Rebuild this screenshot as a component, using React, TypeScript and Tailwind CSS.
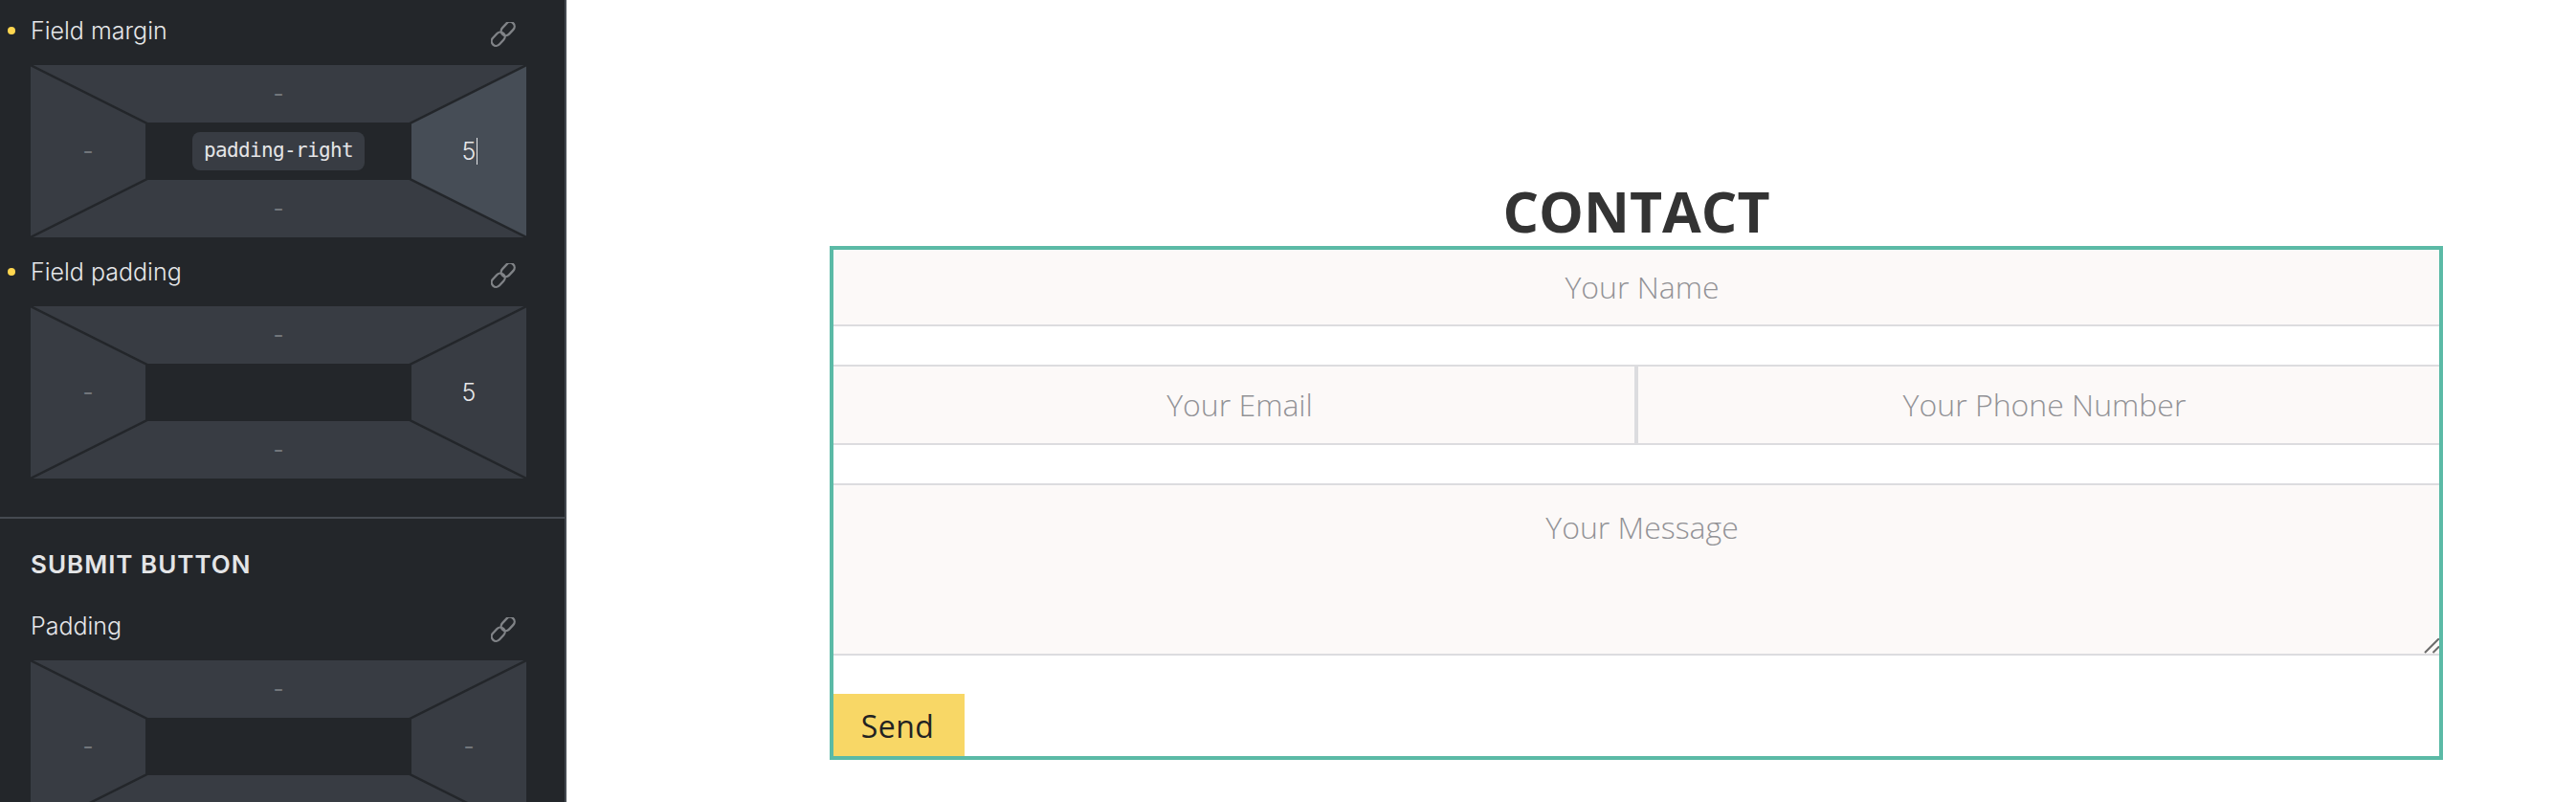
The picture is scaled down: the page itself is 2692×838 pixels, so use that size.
import React from "react";

function LinkIcon() {
  return (
    <svg width="26" height="26" viewBox="0 0 26 26" fill="none" stroke="#808387" strokeWidth="2.3" className="mt-[8px] shrink-0">
      <rect x="12.95" y="-1" width="9.5" height="16" rx="4.75" transform="rotate(43 17.7 7)" />
      <rect x="2.95" y="9.7" width="9.5" height="16" rx="4.75" transform="rotate(43 7.7 17.7)" />
    </svg>
  );
}

function Dash() {
  return <span className="text-[24px] leading-none text-[#72767b]">-</span>;
}

function SpacingBox({ right, active, tip }: { right?: string; active?: boolean; tip?: string }) {
  const seg = "flex items-center justify-center bg-[#383c43]";
  return (
    <div className="grid h-[180px] w-[518px] shrink-0 grid-cols-[120px_278px_120px] grid-rows-[60px_60px_60px]">
      <div className={`${seg} col-start-1 col-end-4 row-start-1 [clip-path:polygon(2.5px_0,calc(100%-2.5px)_0,calc(100%-122.5px)_100%,122.5px_100%)]`}>
        <Dash />
      </div>
      <div className={`${seg} col-start-1 col-end-4 row-start-3 [clip-path:polygon(122.5px_0,calc(100%-122.5px)_0,calc(100%-2.5px)_100%,2.5px_100%)]`}>
        <Dash />
      </div>
      <div className={`${seg} col-start-1 row-start-1 row-end-4 [clip-path:polygon(0_1.5px,100%_61.5px,100%_118.5px,0_178.5px)]`}>
        <Dash />
      </div>
      <div
        className={`flex items-center justify-center col-start-3 row-start-1 row-end-4 [clip-path:polygon(100%_1.5px,0_61.5px,0_118.5px,100%_178.5px)] ${
          active ? "bg-[#464d56]" : "bg-[#383c43]"
        }`}
      >
        {right ? (
          <span className="relative text-[25px] leading-none font-light text-[#e6e7e9]">
            {right}
            {active && <span className="absolute left-full top-[-2px] ml-[1px] h-[28px] w-[1px] bg-[#e6e7e9]" />}
          </span>
        ) : (
          <Dash />
        )}
      </div>
      <div className="col-start-2 row-start-2 flex items-center justify-center">
        {tip && (
          <div className="flex h-[40px] w-[180px] items-center justify-center rounded-[8px] bg-[#383c43] font-['DejaVu_Sans_Mono',monospace] text-[21px] tracking-[-0.65px] text-[#e4e5e7]">
            {tip}
          </div>
        )}
      </div>
    </div>
  );
}

function Control({ label, dot, className, children }: { label: string; dot?: boolean; className?: string; children: React.ReactNode }) {
  return (
    <section className={`flex flex-col ${className ?? ""}`}>
      <div className="relative flex h-[44px] items-center justify-between pl-[32px] pr-[51px]">
        {dot && <span className="absolute left-[8px] top-1/2 size-[8px] -translate-y-1/2 rounded-full bg-[#ffd64f]" />}
        <span className="text-[25px] leading-none font-light text-[#e6e7e9]">{label}</span>
        <LinkIcon />
      </div>
      <div className="pl-[32px]">{children}</div>
    </section>
  );
}

const fieldClass = "bg-[#fcf9f8] pl-[12px] text-center outline-none placeholder:text-[#929296]";

export default function App() {
  return (
    <div className="flex h-[838px] w-[2692px] overflow-hidden bg-white font-['Inter',sans-serif]">
      <aside className="h-full w-[592px] shrink-0 overflow-hidden border-r-2 border-[#454a51] bg-[#23262a] pt-[10px]">
        <Control label="Field margin" dot>
          <div className="mt-[14px]">
            <SpacingBox right="5" active tip="padding-right" />
          </div>
        </Control>
        <Control label="Field padding" dot className="mt-[14px]">
          <div className="mt-[14px]">
            <SpacingBox right="5" />
          </div>
        </Control>
        <div className="mt-[40px] h-[2px] bg-[#454a51]" />
        <h3 className="mt-[33px] pl-[32px] text-[26px] leading-[30px] font-semibold tracking-[1px] text-[#e4e5e7]">SUBMIT BUTTON</h3>
        <Control label="Padding" className="mt-[27px]">
          <div className="mt-[14px]">
            <SpacingBox />
          </div>
        </Control>
      </aside>
      <main className="flex-1 pl-[275px] pr-[139px] pt-[187px]">
        <h1 className="pb-[4px] text-center font-['Open_Sans',sans-serif] text-[59px] leading-[66px] font-bold text-[#333333]">CONTACT</h1>
        <form className="flex h-[537px] flex-col border-4 border-[#5bbaa6] bg-white font-['Open_Sans',sans-serif] text-[32px] font-light">
          <input placeholder="Your Name" className={`h-[80px] w-full border-b-2 border-[#dcdcdf] pb-[2px] ${fieldClass}`} />
          <div className="mt-[40px] flex h-[84px] border-y-2 border-[#dcdcdf]">
            <input placeholder="Your Email" className={`min-w-0 flex-1 border-r-2 border-[#dcdcdf] ${fieldClass}`} />
            <input placeholder="Your Phone Number" className={`min-w-0 flex-1 border-l-2 border-[#dcdcdf] ${fieldClass}`} />
          </div>
          <div className="relative mt-[40px]">
            <textarea
              placeholder="Your Message"
              className={`block h-[180px] w-full resize-none border-y-2 border-[#dcdcdf] pt-[20px] ${fieldClass}`}
            />
            <svg width="16" height="16" viewBox="0 0 16 16" stroke="#6b6b6b" strokeWidth="2" className="absolute bottom-[2px] right-0">
              <path d="M1 15 16 0M9.5 15 16 8.5" />
            </svg>
          </div>
          <button
            type="button"
            className="mt-auto h-[65px] w-[137px] bg-[#f8d766] pt-[2px] pr-[3px] text-[32px] font-normal tracking-[0.5px] text-[#222222]"
          >
            Send
          </button>
        </form>
      </main>
    </div>
  );
}
